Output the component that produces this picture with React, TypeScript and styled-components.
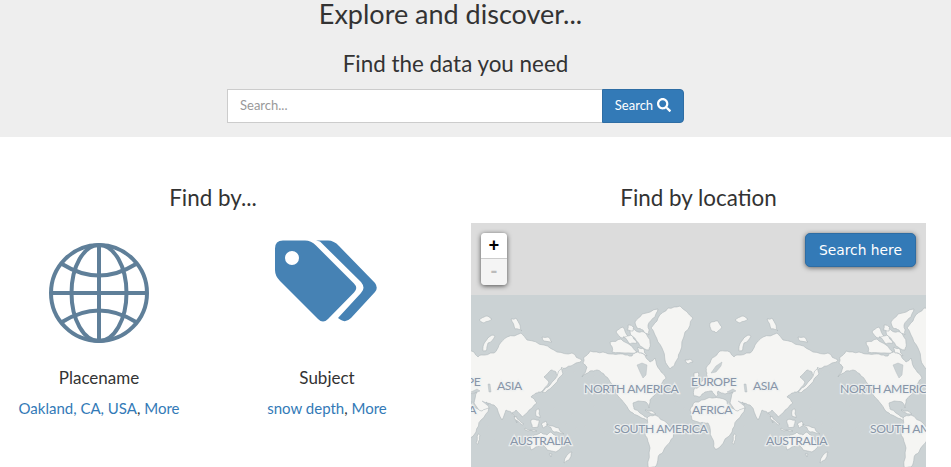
import React from "react";
import styled, { createGlobalStyle } from "styled-components";
import { FaSearch } from "react-icons/fa";

const Global = createGlobalStyle`
  html, body { margin: 0; padding: 0; background: #fff; height: 467px; overflow: hidden; }
  body { font-family: "Lato", "Liberation Sans", sans-serif; color: #333; }
  * { box-sizing: border-box; }
`;

const Hero = styled.header`
  background: #eee;
  height: 137px;
  padding-right: 40px;
  display: flex;
  flex-direction: column;
  align-items: center;
`;
const Title = styled.h1`
  margin: -1px 10px 0 0;
  font-size: 27px;
  line-height: 30px;
  font-weight: 400;
  color: #333;
`;
const Subtitle = styled.h2`
  margin: 20px 0 0;
  font-size: 22.4px;
  line-height: 30px;
  font-weight: 400;
  color: #333;
`;
const SearchForm = styled.form`
  display: flex;
  width: 457px;
  height: 34px;
  margin-top: 10px;
`;
const SearchInput = styled.input`
  flex: 1;
  min-width: 0;
  height: 34px;
  border: 1px solid #ccc;
  border-right: 0;
  background: #fff;
  padding: 0 12px 2px;
  font: 400 13px "Lato", sans-serif;
  color: #555;
  outline: none;
  &::placeholder { color: #999; opacity: 1; }
`;
const SearchButton = styled.button`
  width: 82px;
  height: 34px;
  border: 1px solid #2e6da4;
  border-radius: 0 4px 4px 0;
  background: #337ab7;
  color: #fff;
  font: 400 13px "Lato", sans-serif;
  display: flex;
  align-items: center;
  justify-content: center;
  gap: 4px;
  padding: 0 0 2px;
`;

const Main = styled.main`
  display: flex;
  padding-right: 25px;
`;
const LeftColumn = styled.section`
  width: 456px;
  flex: none;
  margin-left: -15px;
  padding-top: 46px;
`;
const SectionTitle = styled.h3`
  margin: 0;
  height: 30px;
  font-size: 22.4px;
  line-height: 30px;
  font-weight: 400;
  color: #333;
  text-align: center;
`;
const Cards = styled.div`
  display: grid;
  grid-template-columns: 228px 228px;
  margin-top: 30px;
`;
const Card = styled.div`
  display: flex;
  flex-direction: column;
  align-items: center;
`;
const IconSlot = styled.div`
  height: 123px;
  display: flex;
  align-items: flex-start;
  justify-content: center;
`;
const TagsIcon = styled.svg`
  margin-top: -3px;
`;
const CardTitle = styled.div`
  font-size: 17px;
  line-height: 24px;
  color: #333;
`;
const CardLinks = styled.div`
  margin-top: 8px;
  font-size: 15px;
  line-height: 20px;
  color: #333;
`;
const Link = styled.a`
  color: #337ab7;
  text-decoration: none;
`;

const RightColumn = styled.section`
  flex: 1;
  min-width: 0;
  margin-left: 30px;
  padding-top: 46px;
`;
const MapFrame = styled.div`
  position: relative;
  margin-top: 10px;
  height: 244px;
  background: #dcdcdc;
  overflow: hidden;
  padding-top: 72px;
`;
const MapDrawing = styled.svg`
  display: block;
  width: 455px;
  height: 172px;
  background: #cbd2d4;
`;
const ZoomControl = styled.div`
  position: absolute;
  left: 10px;
  top: 10px;
  width: 26px;
  border-radius: 4px;
  overflow: hidden;
  box-shadow: 0 1px 5px rgba(0, 0, 0, 0.65);
`;
const ZoomButton = styled.div<{ $disabled?: boolean }>`
  height: 26px;
  display: flex;
  align-items: center;
  justify-content: center;
  background: ${(p) => (p.$disabled ? "#f4f4f4" : "#fff")};
  color: ${(p) => (p.$disabled ? "#bbb" : "#000")};
  border-bottom: ${(p) => (p.$disabled ? "0" : "1px solid #ccc")};
  font: 700 18px "Liberation Mono", monospace;
`;
const SearchHere = styled.button`
  position: absolute;
  right: 10px;
  top: 10px;
  width: 111px;
  height: 34px;
  border: 1px solid #2e6da4;
  border-radius: 5px;
  background: #337ab7;
  color: #fff;
  font: 400 13.8px "DejaVu Sans", sans-serif;
  padding: 0;
  box-shadow: 0 1px 5px rgba(0, 0, 0, 0.55);
`;
const MapLabel = styled.text`
  font: 400 12.2px "Lato", sans-serif;
  letter-spacing: -0.4px;
  fill: #8795a8;
  stroke: #eff1f1;
  stroke-opacity: 0.85;
  stroke-width: 2.5px;
  paint-order: stroke;
`;

const land: string[] = [
  "584,357 590,351 603,352 613,354 623,354 632,356 637,352 645,355 650,362 655,358 660,370 666,378 662,383 658,388 655,395 650,400 649,408 646,402 638,401 633,403 634,409 640,413 646,417 650,418 646,420 640,417 633,413 625,404 618,396 612,384 605,376 597,370 590,371 582,377 587,367 583,363",
  "635,322 642,314 658,309 655,317 648,325 649,335 643,330 637,328",
  "630,328 636,331 644,332 650,343 649,350 640,346 632,336",
  "610,342 621,339 630,345 637,352 625,353 612,352",
  "616,332 623,327 629,337 622,338",
  "623,337 631,335 637,343 630,344",
  "628,325 634,327 633,331 627,330",
  "638,347 644,349 647,356 639,353",
  "651,328 658,318 668,308 680,306 693,318 685,332 680,352 675,363 670,369 665,360 662,348 655,335",
  "685,360 690,359 693,362 688,364",
  "647,418 655,415 667,423 675,432 670,442 663,452 658,458 655,467 648,467 650,448 645,435 647,427",
  "645,410 652,411 656,414 650,413",
  "720,351 730,352 734,357 737,355 750,353 755,345 763,337 777,333 783,340 800,345 813,352 828,353 838,360 832,363 822,368 817,370 815,378 812,372 807,370 800,377 805,382 797,392 792,393 787,397 793,403 783,413 778,417 772,410 768,413 773,423 767,412 762,410 758,420 750,405 742,402 745,408 735,414 730,403 733,392 725,394 718,391 716,398 712,391 705,392 700,397 694,396 694,389 700,386 703,380 708,378 707,373 706,368 712,358",
  "694,373 698,372 699,381 694,384",
  "690,410 695,402 708,398 713,398 726,400 730,407 738,411 745,408 737,420 732,432 720,447 715,449 712,438 708,423 700,423 692,420",
  "734,434 736,435 734,444 732,443",
  "783,440 790,435 797,432 803,435 807,432 815,440 818,447 812,452 803,450 798,445 787,450",
  "805,454 808,454 807,457",
  "772,416 780,424 778,425 770,418",
  "787,420 795,420 794,427 788,427",
  "781,428 793,431 781,430",
  "797,424 802,421 803,426 799,428",
  "803,424 815,428 820,434 810,432",
  "792,410 795,409 796,418 792,416",
  "806,385 814,373 818,367 819,374 811,384 801,393 798,392",
  "823,455 828,452 825,460 820,463",
  "710,323 718,321 722,327 716,333 711,330",
  "735,320 742,316 748,319 740,323",
  "767,319 772,318 776,325 778,331 771,329",
  "798,337 804,337 808,342 800,341",
  "739,351 741,342 748,335 751,336 744,343 742,351",
];
const water: string[] = [
  "637,365 642,363 647,365 646,375 643,378 640,372",
  "711,373 716,366 722,362 721,366 716,372",
  "727,392 733,389 736,391 730,393",
  "744,384 746,384 747,392 745,392",
  "738,401 745,404 743,405",
];
const specks: [number, number][] = [
  [828, 366], [822, 371], [812, 376], [830, 372], [836, 368], [588, 378], [594, 376], [600, 375],
  [590, 402], [594, 406], [585, 426], [596, 430], [600, 428], [605, 432], [810, 408], [815, 420],
  [822, 424], [828, 414], [832, 428], [826, 436], [750, 440], [744, 426], [752, 430], [676, 402], [684, 408],
];
const labels: { text: string; x: number; y: number }[] = [
  { text: "NORTH AMERICA", x: 584, y: 393 },
  { text: "SOUTH AMERICA", x: 614, y: 433 },
  { text: "EUROPE", x: 691, y: 386 },
  { text: "AFRICA", x: 692, y: 414 },
  { text: "ASIA", x: 753, y: 390 },
  { text: "AUSTRALIA", x: 766, y: 445 },
];
const tileOffsets = [-512, -256, 0, 256];

// Frays a traced outline so the coast reads as an irregular shoreline.
function fray(points: string): string {
  let pts = points.split(" ").map((p) => p.split(",").map(Number));
  for (let pass = 0; pass < 2; pass++) {
    const next: number[][] = [];
    pts.forEach((a, i) => {
      const b = pts[(i + 1) % pts.length];
      const len = Math.hypot(b[0] - a[0], b[1] - a[1]);
      const wave = Math.sin(a[0] * 12.9898 + a[1] * 78.233 + pass) * 43758.5453;
      const amount = ((wave - Math.floor(wave)) - 0.5) * Math.min(len * 0.28, 2.2);
      next.push(a, [(a[0] + b[0]) / 2 - ((b[1] - a[1]) / (len || 1)) * amount, (a[1] + b[1]) / 2 + ((b[0] - a[0]) / (len || 1)) * amount]);
    });
    pts = next;
  }
  return pts.map((p) => `${p[0].toFixed(1)},${p[1].toFixed(1)}`).join(" ");
}
const frayedLand = land.map(fray);

function WorldTile({ dx }: { dx: number }) {
  return (
    <g transform={`translate(${dx} 0)`}>
      {frayedLand.map((pts) => (
        <polygon key={pts} points={pts} fill="#f5f5f3" stroke="#aeb7ba" strokeWidth="0.6" strokeLinejoin="round" />
      ))}
      {water.map((pts) => (
        <polygon key={pts} points={pts} fill="#cbd2d4" stroke="#aeb7ba" strokeWidth="0.4" />
      ))}
      {specks.map(([x, y]) => (
        <circle key={`${x}-${y}`} cx={x} cy={y} r="0.7" fill="#eceeee" stroke="#aeb7ba" strokeWidth="0.3" />
      ))}
    </g>
  );
}

function WorldLabels({ dx }: { dx: number }) {
  return (
    <g transform={`translate(${dx} 0)`}>
      {labels.map((l) => (
        <MapLabel key={l.text} x={l.x} y={l.y}>{l.text}</MapLabel>
      ))}
    </g>
  );
}

function WorldMap() {
  return (
    <MapDrawing viewBox="471 295 455 172">
      {tileOffsets.map((dx) => <WorldTile key={dx} dx={dx} />)}
      {tileOffsets.map((dx) => <WorldLabels key={dx} dx={dx} />)}
    </MapDrawing>
  );
}

function Globe() {
  return (
    <svg width="100" height="100" viewBox="0 0 100 100" fill="none" stroke="#5f7f99" strokeWidth="4">
      <circle cx="50" cy="50" r="48" />
      <ellipse cx="50" cy="50" rx="27.5" ry="48" />
      <path d="M50 2V98M2 50H98" />
      <path d="M13 21Q50 44 87 21M13 79Q50 56 87 79" />
    </svg>
  );
}

function Tags() {
  return (
    <TagsIcon width="104" height="84" viewBox="275 240 104 84" fill="#4682b4">
      <path d="M283 240.5H305Q311 240.5 316 245.5L354 283.5Q358.5 288 354 292.5L328 319Q323 324 318 319L280 281Q275 276 275 270V248.5Q275 240.5 283 240.5ZM292 251A7 7 0 1 0 292 265A7 7 0 1 0 292 251Z" fillRule="evenodd" />
      <path d="M316 240.5H328Q334 240.5 339 246L375 283Q378.5 288 375 292L351 318Q346 323 341 320L338 318L361 293Q366 288 361 282L320 241.5Z" />
    </TagsIcon>
  );
}

export default function App() {
  return (
    <>
      <Global />
      <Hero>
        <Title>Explore and discover...</Title>
        <Subtitle>Find the data you need</Subtitle>
        <SearchForm onSubmit={(e) => e.preventDefault()}>
          <SearchInput placeholder="Search..." />
          <SearchButton type="submit">Search <FaSearch size={14} /></SearchButton>
        </SearchForm>
      </Hero>
      <Main>
        <LeftColumn>
          <SectionTitle>Find by...</SectionTitle>
          <Cards>
            <Card>
              <IconSlot><Globe /></IconSlot>
              <CardTitle>Placename</CardTitle>
              <CardLinks><Link href="#">Oakland, CA, USA</Link>, <Link href="#">More</Link></CardLinks>
            </Card>
            <Card>
              <IconSlot><Tags /></IconSlot>
              <CardTitle>Subject</CardTitle>
              <CardLinks><Link href="#">snow depth</Link>, <Link href="#">More</Link></CardLinks>
            </Card>
          </Cards>
        </LeftColumn>
        <RightColumn>
          <SectionTitle>Find by location</SectionTitle>
          <MapFrame>
            <WorldMap />
            <ZoomControl>
              <ZoomButton>+</ZoomButton>
              <ZoomButton $disabled>-</ZoomButton>
            </ZoomControl>
            <SearchHere type="button">Search here</SearchHere>
          </MapFrame>
        </RightColumn>
      </Main>
    </>
  );
}
